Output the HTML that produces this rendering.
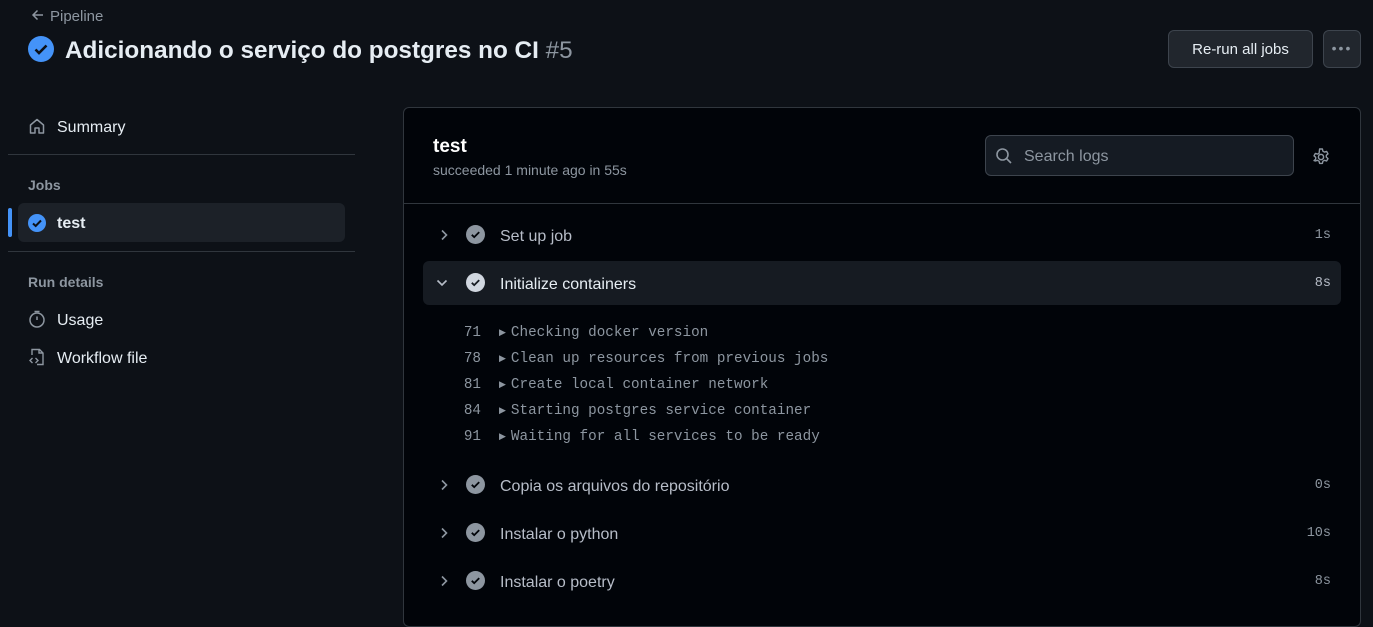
<!DOCTYPE html>
<html><head><meta charset="utf-8"><style>
*{margin:0;padding:0;box-sizing:border-box}
body{width:1373px;height:609px;overflow:hidden;background:#0d1117;font-family:"Liberation Sans",sans-serif;color:#e6edf3;position:relative}
.abs{position:absolute}
.mono{font-family:"Liberation Mono",monospace}
.ar{font-size:9px;vertical-align:1px;margin-right:5px}
.ln{display:inline-block;width:41px;text-align:right;margin-right:18px}
</style></head><body>
<div class="abs" style="left:30px;top:7px;font-size:15px;color:#8d96a0">
<svg width="16" height="16" viewBox="0 0 16 16" style="vertical-align:-2px;margin-right:4px"><path d="M13 8H3M7.5 3.5L3 8l4.5 4.5" stroke="#8d96a0" stroke-width="1.5" fill="none"/></svg>Pipeline</div>
<svg class="abs" style="left:28px;top:36px" width="26" height="26" viewBox="0 0 26 26"><circle cx="13" cy="13" r="13" fill="#4493f8"/><path d="M7.5 13.5l3.5 3.5 7.5-7.5" stroke="#0d1117" stroke-width="2.6" fill="none"/></svg>
<div class="abs" style="left:65px;top:37px;font-size:24.3px;font-weight:bold;color:#e6edf3">Adicionando o serviço do postgres no CI <span style="font-weight:normal;color:#8d96a0">#5</span></div>
<div class="abs" style="left:1168px;top:30px;width:145px;height:38px;background:#21262d;border:1px solid #3d444d;border-radius:6px;font-size:15px;text-align:center;line-height:38px;color:#e6edf3">Re-run all jobs</div>
<div class="abs" style="left:1323px;top:30px;width:38px;height:38px;background:#21262d;border:1px solid #3d444d;border-radius:6px;text-align:center;line-height:34px;color:#8d96a0;font-size:14px;letter-spacing:2px">•••</div>

<svg class="abs" style="left:28px;top:117px" width="18" height="18" viewBox="0 0 18 18"><path d="M2.5 8L9 2.5 15.5 8v8h-4.5v-5h-4v5H2.5z" stroke="#8d96a0" stroke-width="1.5" fill="none" stroke-linejoin="round"/></svg>
<div class="abs" style="left:57px;top:119px;font-size:16px;color:#e6edf3">Summary</div>
<div class="abs" style="left:8px;top:154px;width:347px;height:1px;background:#30363d"></div>
<div class="abs" style="left:28px;top:177px;font-size:14px;font-weight:bold;color:#8d96a0">Jobs</div>
<div class="abs" style="left:8px;top:208px;width:4px;height:29px;background:#4493f8;border-radius:2px"></div>
<div class="abs" style="left:18px;top:203px;width:327px;height:39px;background:#1c2128;border-radius:6px"></div>
<svg class="abs" style="left:28px;top:214px" width="18" height="18" viewBox="0 0 18 18"><circle cx="9" cy="9" r="9" fill="#4493f8"/><path d="M5 9.5l2.7 2.5L13 6.5" stroke="#0d1117" stroke-width="2" fill="none"/></svg>
<div class="abs" style="left:57px;top:215px;font-size:16px;font-weight:bold">test</div>
<div class="abs" style="left:8px;top:251px;width:347px;height:1px;background:#30363d"></div>
<div class="abs" style="left:28px;top:274px;font-size:14px;font-weight:bold;color:#8d96a0">Run details</div>
<svg class="abs" style="left:28px;top:310px" width="18" height="18" viewBox="0 0 18 18"><circle cx="9" cy="10" r="7" stroke="#8d96a0" stroke-width="1.5" fill="none"/><path d="M6.5 1.5h5M9 10V6.5" stroke="#8d96a0" stroke-width="1.5"/></svg>
<div class="abs" style="left:57px;top:312px;font-size:16px">Usage</div>
<svg class="abs" style="left:28px;top:348px" width="18" height="18" viewBox="0 0 18 18"><path d="M4 7V1.5h7.5L15 5v11.5H9M11 1.5V5h4M4.5 10L2 12.5 4.5 15M7.5 10L10 12.5 7.5 15" stroke="#8d96a0" stroke-width="1.4" fill="none"/></svg>
<div class="abs" style="left:57px;top:350px;font-size:16px">Workflow file</div>

<div class="abs" style="left:403px;top:107px;width:958px;height:520px;background:#010409;border:1px solid #30363d;border-radius:6px"></div>
<div class="abs" style="left:433px;top:136px;font-size:19px;font-weight:bold;color:#fff">test</div>
<div class="abs" style="left:433px;top:162px;font-size:14px;color:#8d96a0">succeeded 1 minute ago in 55s</div>
<div class="abs" style="left:985px;top:135px;width:309px;height:41px;background:#151b23;border:1px solid #3d444d;border-radius:6px"></div>
<svg class="abs" style="left:995px;top:147px" width="18" height="18" viewBox="0 0 18 18"><circle cx="7.5" cy="7.5" r="5.5" stroke="#8d96a0" stroke-width="1.6" fill="none"/><path d="M11.5 11.5L16 16" stroke="#8d96a0" stroke-width="1.6"/></svg>
<div class="abs" style="left:1024px;top:148px;font-size:16px;color:#8d96a0">Search logs</div>
<svg class="abs" style="left:1311px;top:147px" width="20" height="20" viewBox="0 0 20 20"><circle cx="10" cy="10" r="2.6" stroke="#8d96a0" stroke-width="1.5" fill="none"/><path d="M8.6 2h2.8l.5 2.2 1.6.9 2.1-.7 1.4 2.4-1.7 1.5v1.8l1.7 1.5-1.4 2.4-2.1-.7-1.6.9-.5 2.2H8.6l-.5-2.2-1.6-.9-2.1.7L3 13.6l1.7-1.5V10.3L3 8.8l1.4-2.4 2.1.7 1.6-.9z" stroke="#8d96a0" stroke-width="1.4" fill="none" stroke-linejoin="round"/></svg>
<div class="abs" style="left:404px;top:203px;width:956px;height:1px;background:#30363d"></div>

<div class="abs" style="left:423px;top:261px;width:918px;height:44px;background:#161b22;border-radius:6px"></div>

<svg class="abs" style="left:437px;top:227px" width="14" height="16" viewBox="0 0 14 16"><path d="M5 3.5l4.5 4.5L5 12.5" stroke="#8d96a0" stroke-width="1.6" fill="none"/></svg>
<svg class="abs" style="left:466px;top:225px" width="19" height="19" viewBox="0 0 19 19"><circle cx="9.5" cy="9.5" r="9.5" fill="#8d96a0"/><path d="M5.8 9.8l2.4 2.3 5-5" stroke="#010409" stroke-width="1.8" fill="none"/></svg>
<div class="abs" style="left:500px;top:228px;font-size:16px;color:#b7bdc8">Set up job</div>
<div class="abs mono" style="left:1300px;top:228px;width:31px;text-align:right;font-size:13.5px;color:#8d96a0">1s</div>

<svg class="abs" style="left:434px;top:276px" width="16" height="14" viewBox="0 0 16 14"><path d="M3.5 4.5L8 9l4.5-4.5" stroke="#b7bdc8" stroke-width="1.6" fill="none"/></svg>
<svg class="abs" style="left:466px;top:273px" width="19" height="19" viewBox="0 0 19 19"><circle cx="9.5" cy="9.5" r="9.5" fill="#d1d7e0"/><path d="M5.8 9.8l2.4 2.3 5-5" stroke="#161b22" stroke-width="1.8" fill="none"/></svg>
<div class="abs" style="left:500px;top:276px;font-size:16px;color:#e6edf3">Initialize containers</div>
<div class="abs mono" style="left:1300px;top:276px;width:31px;text-align:right;font-size:13.5px;color:#b7bdc8">8s</div>

<div class="abs mono" style="left:440px;top:320px;font-size:14.3px;color:#8d96a0;line-height:26px">
<div><span class="ln">71</span><span class="ar">▶</span>Checking docker version</div>
<div><span class="ln">78</span><span class="ar">▶</span>Clean up resources from previous jobs</div>
<div><span class="ln">81</span><span class="ar">▶</span>Create local container network</div>
<div><span class="ln">84</span><span class="ar">▶</span>Starting postgres service container</div>
<div><span class="ln">91</span><span class="ar">▶</span>Waiting for all services to be ready</div>
</div>

<svg class="abs" style="left:437px;top:477px" width="14" height="16" viewBox="0 0 14 16"><path d="M5 3.5l4.5 4.5L5 12.5" stroke="#8d96a0" stroke-width="1.6" fill="none"/></svg>
<svg class="abs" style="left:466px;top:475px" width="19" height="19" viewBox="0 0 19 19"><circle cx="9.5" cy="9.5" r="9.5" fill="#8d96a0"/><path d="M5.8 9.8l2.4 2.3 5-5" stroke="#010409" stroke-width="1.8" fill="none"/></svg>
<div class="abs" style="left:500px;top:478px;font-size:16px;color:#b7bdc8">Copia os arquivos do repositório</div>
<div class="abs mono" style="left:1300px;top:478px;width:31px;text-align:right;font-size:13.5px;color:#8d96a0">0s</div>

<svg class="abs" style="left:437px;top:525px" width="14" height="16" viewBox="0 0 14 16"><path d="M5 3.5l4.5 4.5L5 12.5" stroke="#8d96a0" stroke-width="1.6" fill="none"/></svg>
<svg class="abs" style="left:466px;top:523px" width="19" height="19" viewBox="0 0 19 19"><circle cx="9.5" cy="9.5" r="9.5" fill="#8d96a0"/><path d="M5.8 9.8l2.4 2.3 5-5" stroke="#010409" stroke-width="1.8" fill="none"/></svg>
<div class="abs" style="left:500px;top:526px;font-size:16px;color:#b7bdc8">Instalar o python</div>
<div class="abs mono" style="left:1290px;top:526px;width:41px;text-align:right;font-size:13.5px;color:#8d96a0">10s</div>

<svg class="abs" style="left:437px;top:573px" width="14" height="16" viewBox="0 0 14 16"><path d="M5 3.5l4.5 4.5L5 12.5" stroke="#8d96a0" stroke-width="1.6" fill="none"/></svg>
<svg class="abs" style="left:466px;top:571px" width="19" height="19" viewBox="0 0 19 19"><circle cx="9.5" cy="9.5" r="9.5" fill="#8d96a0"/><path d="M5.8 9.8l2.4 2.3 5-5" stroke="#010409" stroke-width="1.8" fill="none"/></svg>
<div class="abs" style="left:500px;top:574px;font-size:16px;color:#b7bdc8">Instalar o poetry</div>
<div class="abs mono" style="left:1300px;top:574px;width:31px;text-align:right;font-size:13.5px;color:#8d96a0">8s</div>
</body></html>
